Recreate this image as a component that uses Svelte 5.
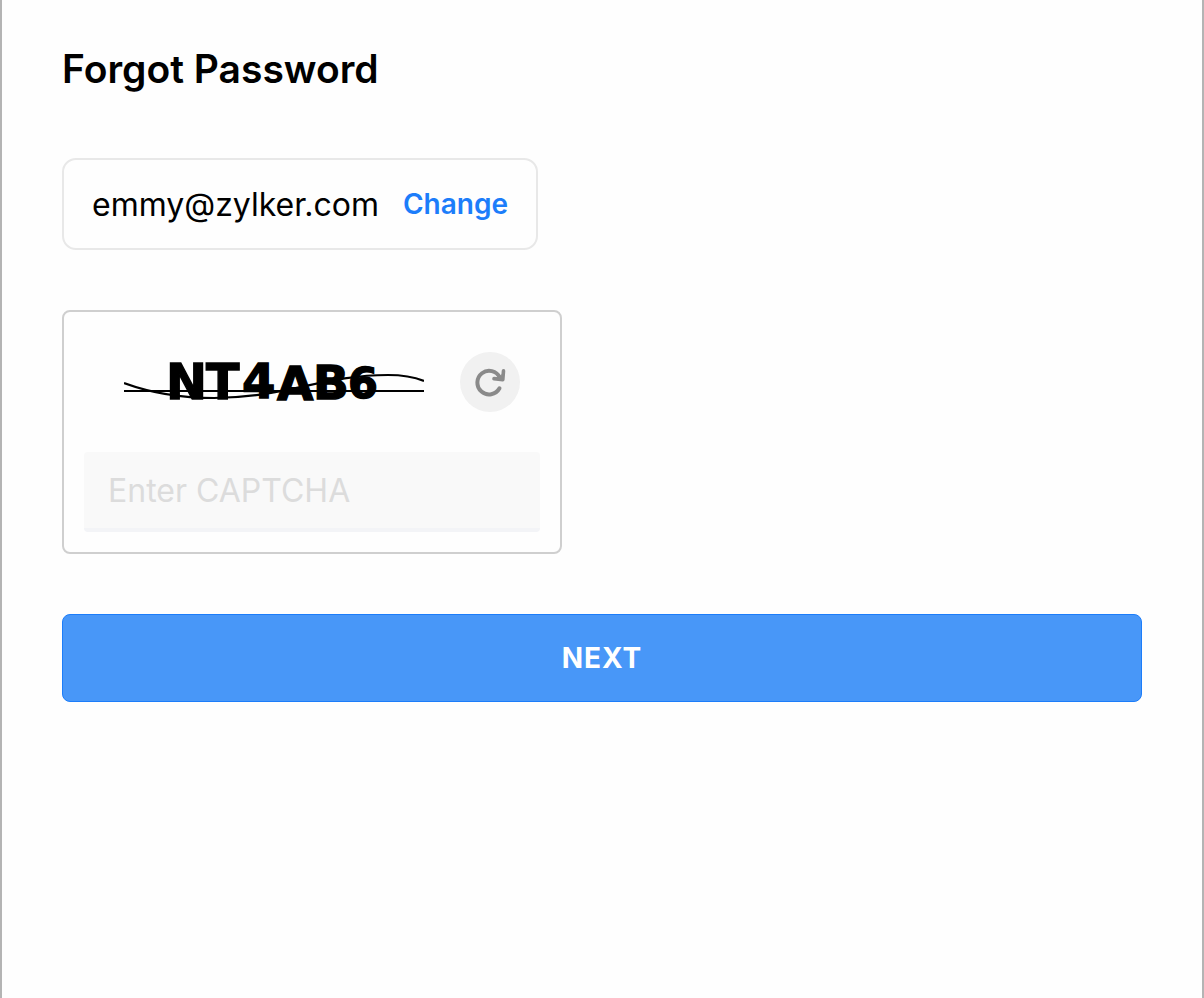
<script lang="ts">
	interface Glyph {
		char: string;
		x: number;
		y: number;
		size: number;
	}

	let email = $state('emmy@zylker.com');
	let captcha = $state('');

	const glyphs: Glyph[] = [
		{ char: 'N', x: 42, y: 59, size: 49 },
		{ char: 'T', x: 82, y: 59, size: 49 },
		{ char: '4', x: 118, y: 58, size: 48 },
		{ char: 'A', x: 153, y: 60, size: 47 },
		{ char: 'B', x: 189, y: 59, size: 47 },
		{ char: '6', x: 224, y: 58, size: 43 }
	];

	function refresh() {
		captcha = '';
	}
</script>

<main class="recovery">
	<h1 class="title">Forgot Password</h1>

	<form class="recovery-form" onsubmit={(e) => e.preventDefault()}>
		<div class="account">
			<span class="account-email">{email}</span>
			<a class="account-change" href="#change">Change</a>
		</div>

		<div class="captcha">
			<div class="captcha-row">
				<svg class="captcha-image" viewBox="0 0 300 84" role="img" aria-label="CAPTCHA">
					{#each glyphs as glyph}
						<text x={glyph.x} y={glyph.y} font-size={glyph.size}>{glyph.char}</text>
					{/each}
					<path d="M0 51H300" />
					<path d="M0 43C30 54 62 58 90 58C160 58 200 35 264 35C278 35 290 37 300 41" />
				</svg>
				<button class="captcha-refresh" type="button" aria-label="Reload CAPTCHA" onclick={refresh}>
					<svg width="60" height="60" viewBox="0 0 60 60" fill="none" stroke="#8a8a8a" stroke-linecap="round">
						<path d="M39.5 36.3A11.8 11.8 0 1 1 39.8 25.5" stroke-width="4" />
						<path
							d="M43.5 18.8L42.8 27.6L34 26.6"
							stroke-width="3.6"
							stroke-linejoin="round"
						/>
						<path d="M42.8 22.5V27L37 26.5Z" fill="#8a8a8a" stroke-width="1" />
					</svg>
				</button>
			</div>
			<input
				class="captcha-input"
				type="text"
				placeholder="Enter CAPTCHA"
				aria-label="Enter CAPTCHA"
				autocomplete="off"
				bind:value={captcha}
			/>
		</div>

		<button class="next" type="submit">NEXT</button>
	</form>
</main>

<style>
	:global(body) {
		background: #fff;
	}

	.recovery {
		box-sizing: border-box;
		min-height: 100vh;
		padding: 44px 60px;
		border: solid #b4b4b4;
		border-width: 0 2px;
		background: #fefefe;
		color: #000;
		font-family: Inter, 'Liberation Sans', sans-serif;
	}

	.title {
		margin: 0 0 64px;
		font-size: 39px;
		font-weight: 600;
		line-height: 50px;
	}

	.recovery-form {
		display: flex;
		flex-direction: column;
		align-items: flex-start;
		gap: 60px;
	}

	.account {
		box-sizing: border-box;
		display: flex;
		align-items: center;
		gap: 24px;
		min-height: 92px;
		max-width: 100%;
		padding: 0 28px;
		border: 2px solid #e8e8e8;
		border-radius: 14px;
	}

	.account-email {
		font-size: 32px;
	}

	.account-change {
		color: #1c7dfa;
		font-size: 28px;
		font-weight: 600;
		text-decoration: none;
	}

	.captcha {
		box-sizing: border-box;
		width: 500px;
		max-width: 100%;
		padding: 20px;
		border: 2px solid #cfcfcf;
		border-radius: 8px;
	}

	.captcha-row {
		display: flex;
		align-items: center;
		justify-content: space-between;
		height: 100px;
		padding: 0 20px 0 40px;
		margin-bottom: 20px;
	}

	.captcha-image {
		width: 300px;
		height: 84px;
		min-width: 0;
	}

	.captcha-image text {
		font-family: 'DejaVu Sans', sans-serif;
		font-weight: 700;
		stroke: #000;
		stroke-width: 1.4;
	}

	.captcha-image path {
		fill: none;
		stroke: #000;
		stroke-width: 2.2;
	}

	.captcha-refresh {
		flex-shrink: 0;
		width: 60px;
		height: 60px;
		padding: 0;
		border: none;
		border-radius: 50%;
		background: #f1f1f1;
		cursor: pointer;
	}

	.captcha-refresh svg {
		display: block;
	}

	.captcha-input {
		box-sizing: border-box;
		display: block;
		width: 100%;
		height: 80px;
		padding: 0 24px;
		border: none;
		border-bottom: 4px solid #f3f4f7;
		border-radius: 4px;
		background: #f9f9f9;
		color: #000;
		font: inherit;
		font-size: 32px;
		outline: none;
	}

	.captcha-input::placeholder {
		color: #dcdcdc;
		opacity: 1;
	}

	.next {
		width: 100%;
		height: 88px;
		border: 1px solid #1c7dfa;
		border-radius: 8px;
		background: #4897f8;
		color: #fff;
		font: inherit;
		font-size: 28px;
		font-weight: 700;
		letter-spacing: 1px;
		cursor: pointer;
	}
</style>
